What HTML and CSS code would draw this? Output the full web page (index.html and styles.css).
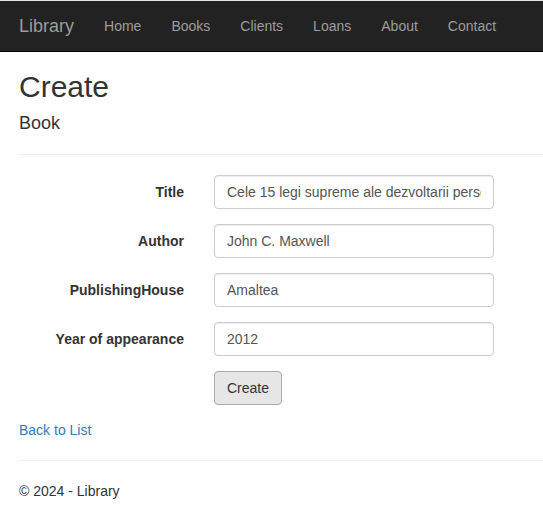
FILE: index.html
```html
<!DOCTYPE html>
<html>
<head>
<meta charset="utf-8">
<title>Create - Library</title>
<link rel="stylesheet" href="styles.css">
</head>
<body>
<nav class="navbar">
  <a class="brand" href="#">Library</a>
  <ul class="nav">
    <li><a href="#">Home</a></li>
    <li><a href="#">Books</a></li>
    <li><a href="#">Clients</a></li>
    <li><a href="#">Loans</a></li>
    <li><a href="#">About</a></li>
    <li><a href="#">Contact</a></li>
  </ul>
</nav>
<main class="content">
  <h2 class="title">Create</h2>
  <h4 class="subtitle">Book</h4>
  <hr class="rule rule-head">
  <form class="form">
    <div class="form-group">
      <label class="control-label">Title</label>
      <input class="form-control" type="text" value="Cele 15 legi supreme ale dezvoltarii personale">
    </div>
    <div class="form-group">
      <label class="control-label">Author</label>
      <input class="form-control" type="text" value="John C. Maxwell">
    </div>
    <div class="form-group">
      <label class="control-label">PublishingHouse</label>
      <input class="form-control" type="text" value="Amaltea">
    </div>
    <div class="form-group">
      <label class="control-label">Year of appearance</label>
      <input class="form-control" type="text" value="2012">
    </div>
    <div class="form-group">
      <span class="control-label"></span>
      <div><button type="button" class="btn">Create</button></div>
    </div>
  </form>
  <div class="back"><a href="#">Back to List</a></div>
  <hr class="rule rule-foot">
  <footer class="footer">
    <p>&copy; 2024 - Library</p>
  </footer>
</main>
</body>
</html>
```

FILE: styles.css
```css
* { box-sizing: border-box; }
html, body { margin: 0; padding: 0; }
body {
  font-family: "Liberation Sans", Arial, Helvetica, sans-serif;
  font-size: 14px;
  line-height: 20px;
  color: #333;
  background: #fff;
  overflow: hidden;
}
.navbar {
  display: flex;
  align-items: center;
  height: 52px;
  background: #222;
  border-top: 1px solid #e3e3e3;
  border-bottom: 1px solid #080808;
  padding-left: 4px;
}
.brand {
  color: #9d9d9d;
  font-size: 18px;
  line-height: 20px;
  padding: 15px;
  text-decoration: none;
}
.nav {
  display: flex;
  list-style: none;
  margin: 0;
  padding: 0;
}
.nav a {
  display: block;
  color: #9d9d9d;
  text-decoration: none;
  padding: 15px;
  line-height: 20px;
}
.content {
  padding-left: 19px;
}
.title {
  font-size: 30px;
  font-weight: 500;
  line-height: 33px;
  margin: 18px 0 10px;
}
.subtitle {
  font-size: 18px;
  font-weight: 500;
  line-height: 20px;
  margin: 10px 0 0;
}
.rule {
  border: 0;
  border-top: 1px solid #eee;
  margin: 20px 0;
  margin-right: -20px;
}
.rule-head { margin-top: 21px; }
.form-group {
  display: grid;
  grid-template-columns: 165px 280px;
  column-gap: 30px;
  margin-bottom: 15px;
}
.control-label {
  text-align: right;
  font-weight: bold;
  padding-top: 7px;
  line-height: 20px;
}
.form-control {
  display: block;
  width: 280px;
  height: 34px;
  padding: 6px 12px;
  font-family: inherit;
  font-size: 14px;
  line-height: 20px;
  color: #555;
  background: #fff;
  border: 1px solid #ccc;
  border-radius: 4px;
  box-shadow: inset 0 1px 1px rgba(0,0,0,.075);
}
.btn {
  height: 34px;
  padding: 6px 12px;
  font-family: inherit;
  font-size: 14px;
  line-height: 20px;
  color: #333;
  background: #e6e6e6;
  border: 1px solid #adadad;
  border-radius: 4px;
}
.back { line-height: 20px; }
.back a { color: #337ab7; text-decoration: none; }
.footer p { margin: 0 0 10px; }
```
